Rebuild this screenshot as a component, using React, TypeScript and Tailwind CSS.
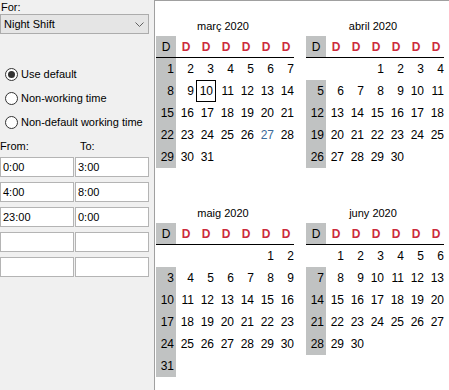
import React from "react";

type Month = {
  title: string;
  offset: number; // empty cells before day 1 (Sunday-first, D column)
  days: number;
};

const months: Month[] = [
  { title: "març 2020", offset: 0, days: 31 },
  { title: "abril 2020", offset: 3, days: 30 },
  { title: "maig 2020", offset: 5, days: 31 },
  { title: "juny 2020", offset: 1, days: 30 },
];

const SELECTED = { month: "març 2020", day: 10 };
const TODAY = { month: "març 2020", day: 27 };

function Radio({ label, checked }: { label: string; checked?: boolean }) {
  return (
    <div className="flex h-[24px] items-center gap-[3px] whitespace-nowrap pl-[5px]">
      <span className="flex h-[13px] w-[13px] items-center justify-center rounded-full border border-[#333] bg-white">
        {checked && <span className="h-[7px] w-[7px] rounded-full bg-[#333]" />}
      </span>
      <span>{label}</span>
    </div>
  );
}

function TimeInput({ value }: { value?: string }) {
  return (
    <div className="flex h-[20px] items-center border border-[#b4b4b4] bg-white px-[2px]">
      {value}
    </div>
  );
}

function MonthCalendar({ month }: { month: Month }) {
  const cells: (number | null)[] = [];
  for (let i = 0; i < month.offset; i++) cells.push(null);
  for (let d = 1; d <= month.days; d++) cells.push(d);
  while (cells.length < 42) cells.push(null);

  return (
    <div className="w-[140px]">
      <div className="flex h-[20px] items-center justify-center pr-[6px] text-[11px] text-black">
        {month.title}
      </div>
      <div className="grid h-[21px] grid-cols-7 items-stretch">
        <div className="flex items-center justify-center bg-[#c0c2c2] text-black">D</div>
        {[0, 1, 2, 3, 4, 5].map((i) => (
          <div key={i} className="flex items-center justify-center font-bold text-[#cc2a3d]">
            D
          </div>
        ))}
      </div>
      <div className="mr-[2px] h-[1px] bg-black" />
      <div className="grid grid-cols-7">
        {cells.map((d, i) => {
          const sunday = i % 7 === 0;
          const selected = d === SELECTED.day && month.title === SELECTED.month;
          const today = d === TODAY.day && month.title === TODAY.month;
          return (
            <div
              key={i}
              className={`flex h-[22px] items-center justify-end pr-[2px] ${
                d !== null && sunday ? "bg-[#c0c2c2]" : ""
              } ${selected ? "justify-center border border-black pr-0" : ""} ${
                today ? "text-[#3b6a9a]" : "text-black"
              }`}
            >
              {d}
            </div>
          );
        })}
      </div>
    </div>
  );
}

export default function App() {
  return (
    <div className="flex h-[390px] w-[449px] overflow-hidden bg-white font-['Liberation_Sans',Arial,sans-serif] text-[12px] text-black">
      <div className="flex w-[154px] shrink-0 flex-col bg-[#f0f0f0] pr-[5px] text-[11px]">
        <div className="flex h-[14px] items-center pl-[1px]">For:</div>
        <div className="flex h-[20px] items-center justify-between border border-[#acacac] bg-[#e5e5e5] pl-[3px] pr-[4px]">
          <span>Night Shift</span>
          <svg width="9" height="5" viewBox="0 0 9 5" className="text-[#606060]">
            <path d="M0.5 0.5 L4.5 4.5 L8.5 0.5" fill="none" stroke="currentColor" strokeWidth="1" />
          </svg>
        </div>
        <div className="mt-[28px] flex flex-col">
          <Radio label="Use default" checked />
          <Radio label="Non-working time" />
          <Radio label="Non-default working time" />
        </div>
        <div className="mt-[5px] flex h-[14px] items-center">
          <span className="w-[80px]">From:</span>
          <span>To:</span>
        </div>
        <div className="mt-[4px] flex flex-col gap-[5px]">
          {[
            ["0:00", "3:00"],
            ["4:00", "8:00"],
            ["23:00", "0:00"],
            ["", ""],
            ["", ""],
          ].map(([from, to], i) => (
            <div key={i} className="grid grid-cols-[74px_74px] gap-[1px]">
              <TimeInput value={from} />
              <TimeInput value={to} />
            </div>
          ))}
        </div>
      </div>
      <div className="flex-1 border-l border-t border-l-[#a0a0a0] border-t-[#a0a0a0] bg-white pl-[1px] pt-[15px]">
        <div className="grid grid-cols-[140px_140px] gap-x-[10px] gap-y-[13px]">
          {months.map((m) => (
            <MonthCalendar key={m.title} month={m} />
          ))}
        </div>
      </div>
    </div>
  );
}
